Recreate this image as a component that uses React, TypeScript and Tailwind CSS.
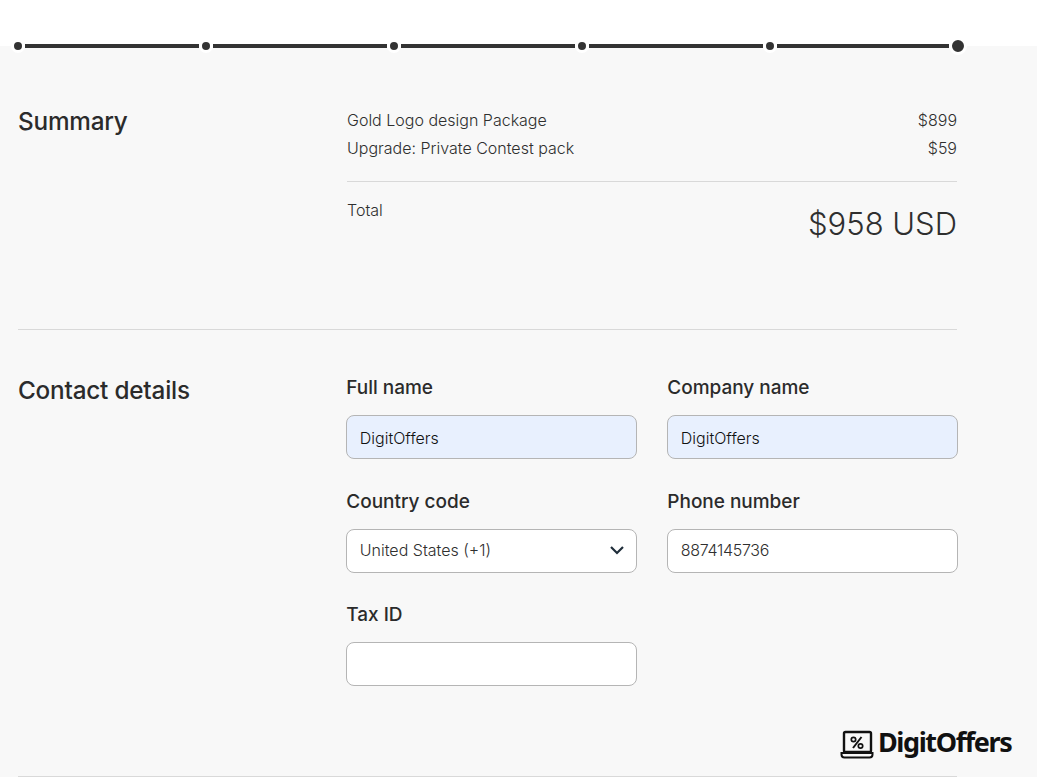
const font = { fontFamily: 'Inter, "Liberation Sans", sans-serif' };

function Dot({ big }: { big?: boolean }) {
  return (
    <span
      className={
        big
          ? "w-[18px] h-[18px] shrink-0 rounded-full bg-[#333333] border-[3px] border-white"
          : "w-[14px] h-[14px] shrink-0 rounded-full bg-[#333333] border-[3px] border-white"
      }
    />
  );
}

function Line({ short }: { short?: boolean }) {
  return <span className={short ? "w-[172px] h-[4px] bg-[#333333]" : "w-[174px] h-[4px] bg-[#333333]"} />;
}

function Field({ label, value, filled, select, tight }: { label: string; value?: string; filled?: boolean; select?: boolean; tight?: boolean }) {
  return (
    <div>
      <div className="h-[24px] text-[19px] leading-[26px] font-medium text-[#2b2b2b] tracking-[-0.02px]">{label}</div>
      <div
        className={
          (filled ? "bg-[#e8f0fe] text-[#111111] pt-[1px]" : "bg-white text-[#2f2f2f] pb-[1px]") +
          " mt-[16px] h-[44px] rounded-[8px] border border-[#b5b5b5] pl-[12.5px] pr-[11px] flex items-center justify-between text-[16px] font-light"
        }
      >
        <span className={tight ? "tracking-[-0.3px]" : ""}>{value}</span>
        {select && (
          <svg width="16" height="10" viewBox="0 0 16 10" fill="none">
            <path d="M2 2l6 6 6-6" stroke="#1f2d3a" strokeWidth="2.2" />
          </svg>
        )}
      </div>
    </div>
  );
}

export default function App() {
  return (
    <div className="relative h-[777px] w-[1037px] overflow-hidden bg-[#f8f8f8]" style={font}>
      <div className="h-[46px] bg-white" />
      <div className="h-0 pl-[11px] flex items-center">
        <Dot />
        <Line />
        <Dot />
        <Line />
        <Dot />
        <Line />
        <Dot />
        <Line />
        <Dot />
        <Line short />
        <Dot big />
      </div>

      <div className="w-[939px] ml-[18px]">
        <section className="flex h-[284px] border-b border-[#d9d9d9] pt-[60px]">
          <h2 className="w-[329px] shrink-0 text-[24.3px] leading-[32px] font-medium text-[#2b2b2b] tracking-[-0.2px] -mt-[1px]">Summary</h2>
          <div className="flex-1 text-[#2f2f2f] font-light">
            <div className="flex justify-between text-[16px] leading-[28px]">
              <span>Gold Logo design Package</span>
              <span>$899</span>
            </div>
            <div className="flex justify-between text-[16px] leading-[28px]">
              <span>Upgrade: Private Contest pack</span>
              <span>$59</span>
            </div>
            <div className="mt-[19px] border-t border-[#d9d9d9] pt-[18px] flex justify-between items-start">
              <span className="text-[16px] leading-[20px]">Total</span>
              <span className="text-[31px] leading-[48px]">$958 USD</span>
            </div>
          </div>
        </section>

        <section className="flex h-[447px] border-b border-[#d9d9d9] pt-[45px]">
          <h2 className="w-[328.3px] shrink-0 text-[24.3px] leading-[32px] font-medium text-[#2b2b2b] tracking-[-0.2px] -mt-[1px]">Contact details</h2>
          <div className="grid grid-cols-[290.5px_290.5px] gap-x-[30.5px] gap-y-[29.6px] content-start">
            <Field label="Full name" value="DigitOffers" filled />
            <Field label="Company name" value="DigitOffers" filled />
            <Field label="Country code" value="United States (+1)" select />
            <Field label="Phone number" value="8874145736" tight />
            <Field label="Tax ID" />
          </div>
        </section>
      </div>

      <div className="absolute left-[840px] top-[727px] flex items-center gap-[4px]">
        <svg width="34" height="32" viewBox="0 0 34 32" fill="none">
          <rect x="4" y="5" width="27" height="20" rx="1.5" stroke="#111" strokeWidth="2.4" />
          <path d="M1.5 26h31v1.5a3 3 0 0 1-3 3h-25a3 3 0 0 1-3-3z" stroke="#111" strokeWidth="2" />
          <path d="M21.5 10L13 21" stroke="#111" strokeWidth="2" />
          <circle cx="13.5" cy="12.5" r="2.2" stroke="#111" strokeWidth="1.7" />
          <circle cx="20.5" cy="19" r="2.2" stroke="#111" strokeWidth="1.7" />
        </svg>
        <span className="text-[27px] leading-[32px] font-bold text-[#111111] tracking-[-1.4px] -mt-[2px]" style={{ fontFamily: '"Noto Sans", sans-serif' }}>
          DigitOffers
        </span>
      </div>
    </div>
  );
}
